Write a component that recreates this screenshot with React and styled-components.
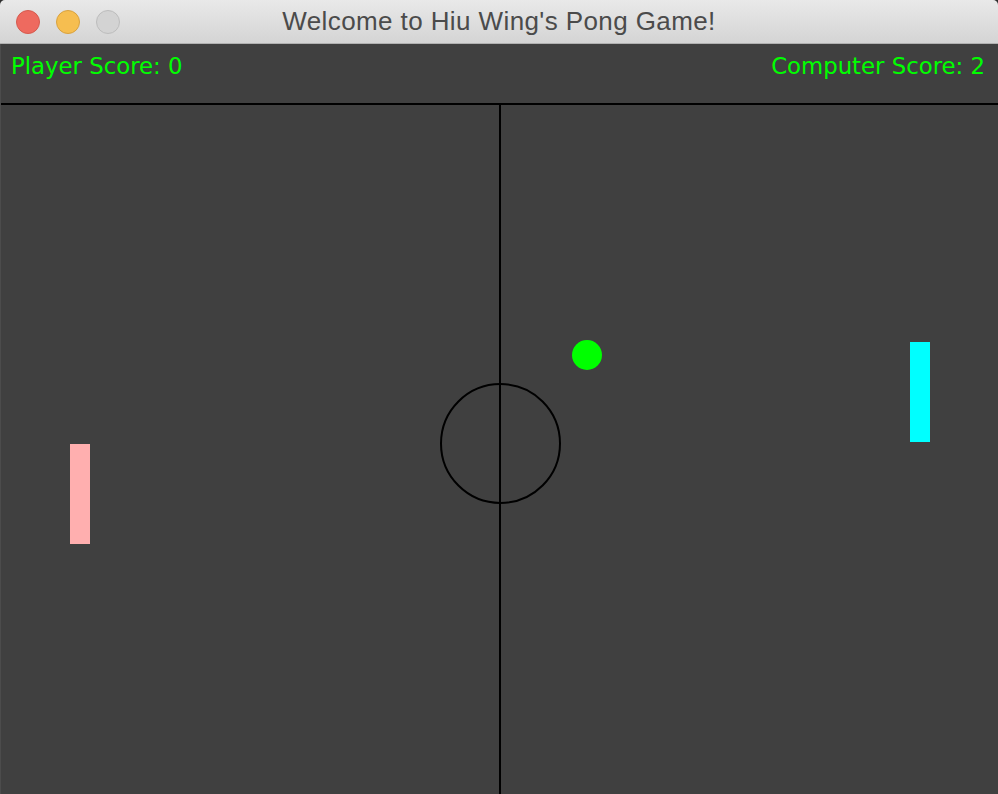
import React from 'react';
import styled, { createGlobalStyle } from 'styled-components';

const game = {
  title: "Welcome to Hiu Wing's Pong Game!",
  playerScore: 0,
  computerScore: 2,
  player: { x: 70, y: 339, color: '#ffafaf' },
  computer: { x: 910, y: 237, color: '#00ffff' },
  ball: { x: 572, y: 235 },
};

const lights = [
  { key: 'close', fill: '#ee6a5f', edge: '#d65a4e' },
  { key: 'min', fill: '#f6be50', edge: '#d9a23f' },
  { key: 'max', fill: '#d3d3d3', edge: '#bdbdbd' },
];

const App = () => {
  const { title, playerScore, computerScore, player, computer, ball } = game;
  return (
    <>
      <GlobalStyle />
      <Window>
        <TitleBar>
          <Lights>
            {lights.map(light => (
              <Light key={light.key} fill={light.fill} edge={light.edge} />
            ))}
          </Lights>
          <Title>{title}</Title>
        </TitleBar>
        <Board>
          <ScoreBar>
            <Score>Player Score: {playerScore}</Score>
            <Score>Computer Score: {computerScore}</Score>
          </ScoreBar>
          <Field>
            <CenterCircle />
            <Paddle x={player.x} y={player.y} color={player.color} />
            <Paddle x={computer.x} y={computer.y} color={computer.color} />
            <Ball x={ball.x} y={ball.y} />
          </Field>
        </Board>
      </Window>
    </>
  );
};

const GlobalStyle = createGlobalStyle`
  html, body {
    margin: 0;
    padding: 0;
    background: #2e2e2e;
  }
  * {
    box-sizing: border-box;
  }
`;

const Window = styled.div`
  display: flex;
  flex-direction: column;
  width: 998px;
  height: 794px;
  border-radius: 5px 5px 0 0;
  overflow: hidden;
  background: #404040;
`;

const TitleBar = styled.header`
  position: relative;
  display: flex;
  align-items: center;
  justify-content: center;
  height: 44px;
  flex-shrink: 0;
  background: linear-gradient(#e9e9e9, #d4d4d4);
  border-bottom: 1px solid #b1b1b1;
`;

const Lights = styled.div`
  position: absolute;
  left: 16px;
  top: 10px;
  display: flex;
  gap: 16px;
`;

const Light = styled.span`
  width: 24px;
  height: 24px;
  border-radius: 50%;
  background: ${props => props.fill};
  border: 1px solid ${props => props.edge};
`;

const Title = styled.h1`
  margin: 0;
  font-family: 'Liberation Sans', Arial, sans-serif;
  font-weight: normal;
  font-size: 26px;
  color: #4b4b4b;
  letter-spacing: 0.4px;
`;

const Board = styled.main`
  display: flex;
  flex-direction: column;
  flex: 1;
  background: #404040;
  border-left: 1px solid #4c4c4c;
`;

const ScoreBar = styled.div`
  display: flex;
  justify-content: space-between;
  align-items: flex-start;
  height: 61px;
  flex-shrink: 0;
  padding: 9px 13px 0 10px;
  border-bottom: 2px solid #000;
`;

const Score = styled.span`
  font-family: 'DejaVu Sans', 'Lucida Grande', sans-serif;
  font-size: 22.8px;
  line-height: 26px;
  color: #00ff00;
`;

const Field = styled.div`
  position: relative;
  flex: 1;

  &::before {
    content: '';
    position: absolute;
    left: 498px;
    top: 0;
    bottom: 0;
    width: 2px;
    background: #000;
  }
`;

const CenterCircle = styled.div`
  position: absolute;
  left: 439px;
  top: 278px;
  width: 121px;
  height: 121px;
  border: 2px solid #000;
  border-radius: 50%;
`;

const Paddle = styled.div`
  position: absolute;
  left: ${props => props.x - 1}px;
  top: ${props => props.y}px;
  width: 20px;
  height: 100px;
  background: ${props => props.color};
`;

const Ball = styled.div`
  position: absolute;
  left: ${props => props.x - 1}px;
  top: ${props => props.y}px;
  width: 30px;
  height: 30px;
  border-radius: 50%;
  background: #00ff00;
`;

export default App;
